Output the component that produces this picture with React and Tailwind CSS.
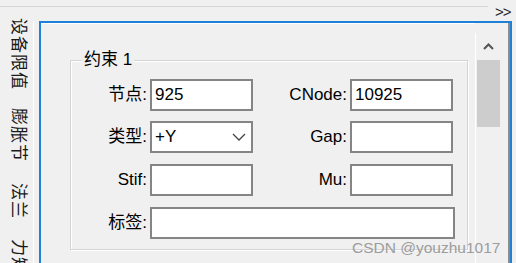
export default function App() {
  const font = "font-['Liberation_Sans','Noto_Sans_CJK_SC',sans-serif]";

  return (
    <div className={`relative flex h-[263px] w-[516px] flex-col overflow-hidden bg-[#f0f0f0] text-[17px] text-black ${font}`}>
      {/* top strip */}
      <div className="flex h-[21px] shrink-0 items-start">
        <div className="mt-[6px] h-px w-[488px] bg-[#d6d6d6]" />
        <div className="ml-[7px] mt-[4px] text-[15px] leading-none tracking-[-1px] text-[#222]">&gt;&gt;</div>
      </div>

      <div className="flex min-h-0 flex-1">
        {/* vertical tabs */}
        <div className="flex w-[39px] shrink-0">
          <div className="-mt-[3px] flex w-[33px] flex-col items-center pl-[3px] text-[17px] leading-[18px] text-[#1a1a1a]">
            <span className="whitespace-nowrap [writing-mode:vertical-rl] [text-orientation:sideways] tracking-[1px]">设备限值</span>
            <span className="mt-[18px] whitespace-nowrap [writing-mode:vertical-rl] [text-orientation:sideways] tracking-[1px]">膨胀节</span>
            <span className="mt-[21px] whitespace-nowrap [writing-mode:vertical-rl] [text-orientation:sideways] tracking-[1px]">法兰</span>
            <span className="mt-[20px] whitespace-nowrap [writing-mode:vertical-rl] [text-orientation:sideways] tracking-[1px]">力矩</span>
          </div>
          <div className="w-px bg-white" />
        </div>

        {/* panel */}
        <div className="flex h-[260px] w-[473px] shrink-0 border-l-2 border-r-2 border-t-2 border-[#1e80d6]">
          <div className="relative w-[434px] shrink-0 border-t border-white">
            {/* group box */}
            <div className="relative ml-[29px] mt-[36px] h-[190px] w-[398px] border border-[#d4d4d4] shadow-[inset_1px_1px_0_#fff,1px_1px_0_#fff]">
              <div className="absolute left-[11px] top-[-10px] bg-[#f0f0f0] px-[2px] leading-[18px]">约束 1</div>

              <div className="flex flex-col pt-[18px]">
                <div className="flex h-[32px] items-center">
                  <span className="w-[76px] text-right">节点:</span>
                  <div className="ml-[3px] flex h-[32px] w-[103px] items-center border-2 border-[#858585] bg-white pl-[3px]">925</div>
                  <span className="w-[94px] text-right">CNode:</span>
                  <div className="ml-[3px] flex h-[32px] w-[103px] items-center border-2 border-[#858585] bg-white pl-[3px]">10925</div>
                </div>

                <div className="mt-[10px] flex h-[32px] items-center">
                  <span className="w-[76px] text-right">类型:</span>
                  <div className="ml-[3px] flex h-[32px] w-[103px] items-center justify-between border-2 border-[#858585] bg-white pl-[3px] pr-[5px]">
                    <span>+Y</span>
                    <svg width="14" height="8" viewBox="0 0 14 8" fill="none" stroke="#444" strokeWidth="1.3">
                      <path d="M1 1l6 6 6-6" />
                    </svg>
                  </div>
                  <span className="w-[94px] text-right">Gap:</span>
                  <div className="ml-[3px] h-[32px] w-[103px] border-2 border-[#858585] bg-white" />
                </div>

                <div className="mt-[11px] flex h-[32px] items-center">
                  <span className="w-[76px] text-right">Stif:</span>
                  <div className="ml-[3px] h-[32px] w-[103px] border-2 border-[#858585] bg-white" />
                  <span className="w-[94px] text-right">Mu:</span>
                  <div className="ml-[3px] h-[32px] w-[103px] border-2 border-[#858585] bg-white" />
                </div>

                <div className="mt-[11px] flex h-[32px] items-center">
                  <span className="w-[76px] text-right">标签:</span>
                  <div className="ml-[3px] h-[32px] w-[305px] border-2 border-[#858585] bg-white" />
                </div>
              </div>
            </div>
          </div>

          {/* scrollbar */}
          <div className="flex flex-1">
            <div className="mt-[10px] flex">
              <div className="w-px bg-white" />
              <div className="flex w-[25px] flex-col items-center">
                <svg className="mt-[10px]" width="11" height="7" viewBox="0 0 11 7" fill="none" stroke="#555" strokeWidth="2">
                  <path d="M1 6l4.5-4.5L10 6" />
                </svg>
                <div className="mt-[10px] h-[67px] w-[23px] bg-[#cdcdcd]" />
              </div>
            </div>
            <div className="ml-auto w-[2px] bg-[#8c8c8c]" />
          </div>
        </div>
      </div>

      {/* watermark */}
      <div className="absolute left-[352px] top-[236px] text-[15.5px] text-[#9d9d9d] font-['Liberation_Sans',sans-serif]">CSDN @youzhu1017</div>
    </div>
  );
}
